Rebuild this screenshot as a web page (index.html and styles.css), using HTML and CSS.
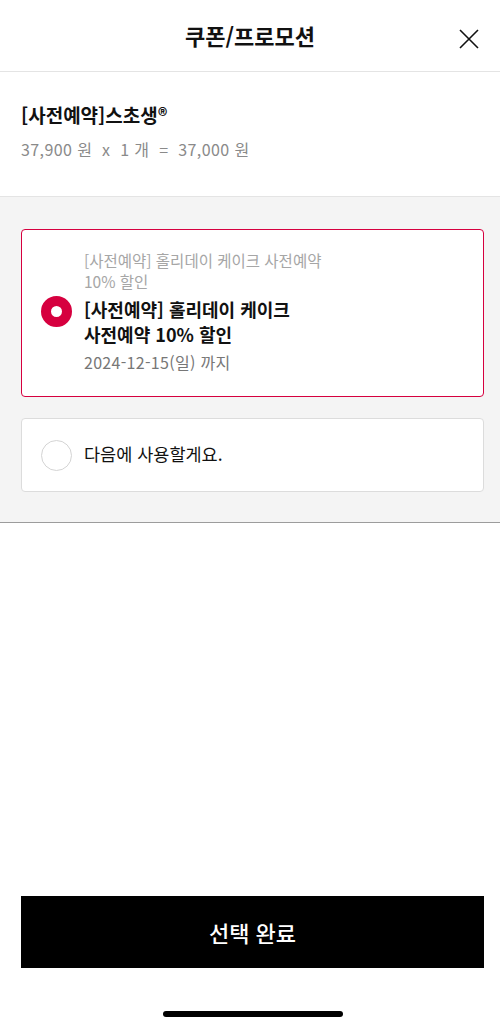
FILE: index.html
```html
<!DOCTYPE html>
<html lang="ko">
<head>
    <meta charset="UTF-8">
    <meta name="viewport" content="width=device-width, initial-scale=1.0">
    <title>쿠폰/프로모션</title>
    <link rel="stylesheet" href="styles.css">
</head>
<body>
    <div class="sheet">
        <header class="sheet-header">
            <h1 class="sheet-title">쿠폰/프로모션</h1>
            <button class="close-btn" aria-label="닫기">
                <svg width="20" height="20" viewBox="0 0 20 20">
                    <path d="M1 1 L19 19 M19 1 L1 19" stroke="#111" stroke-width="1.6" fill="none"/>
                </svg>
            </button>
        </header>

        <section class="product">
            <h2 class="product-name">[사전예약]스초생®</h2>
            <p class="product-price">37,900 원&nbsp; x&nbsp; 1 개&nbsp; =&nbsp; 37,000 원</p>
        </section>

        <section class="coupons">
            <label class="coupon selected">
                <span class="radio"></span>
                <span class="coupon-body">
                    <span class="coupon-sub">[사전예약] 홀리데이 케이크 사전예약<br>10% 할인</span>
                    <span class="coupon-name">[사전예약] 홀리데이 케이크<br>사전예약 10% 할인</span>
                    <span class="coupon-date">2024-12-15(일) 까지</span>
                </span>
            </label>
            <label class="coupon">
                <span class="radio"></span>
                <span class="coupon-body">
                    <span class="coupon-later">다음에 사용할게요.</span>
                </span>
            </label>
        </section>

        <div class="spacer"></div>

        <footer class="sheet-footer">
            <button class="confirm-btn">선택 완료</button>
            <div class="home-bar"></div>
        </footer>
    </div>
</body>
</html>
```

FILE: styles.css
```css
* {
    margin: 0;
    padding: 0;
    box-sizing: border-box;
}

body {
    font-family: "Noto Sans CJK KR", "Noto Sans", sans-serif;
    background-color: #ffffff;
    color: #111111;
}

.sheet {
    width: 500px;
    height: 1027px;
    display: flex;
    flex-direction: column;
}

/* Header */
.sheet-header {
    height: 72px;
    border-bottom: 1px solid #e4e4e4;
    display: flex;
    align-items: center;
    justify-content: center;
    position: relative;
}

.sheet-title {
    font-size: 22px;
    font-weight: 700;
    margin-top: -2px;
}

.close-btn {
    position: absolute;
    right: 21px;
    top: 29px;
    width: 20px;
    height: 20px;
    background: none;
    border: none;
    display: flex;
}

/* Product */
.product {
    height: 125px;
    padding: 29px 21px 0;
    border-bottom: 1px solid #e4e4e4;
}

.product-name {
    font-size: 19px;
    font-weight: 700;
    line-height: 28px;
}

.product-price {
    margin-top: 9px;
    font-size: 16px;
    color: #8a8a8a;
    line-height: 22px;
    letter-spacing: 0.4px;
}

/* Coupon list */
.coupons {
    background-color: #f4f4f4;
    padding: 32px 16px 30px 21px;
    border-bottom: 1px solid #9c9c9c;
    display: flex;
    flex-direction: column;
    gap: 21px;
}

.coupon {
    background-color: #ffffff;
    border: 1px solid #dcdcdc;
    border-radius: 4px;
    display: flex;
    align-items: center;
    padding: 0 20px 0 19px;
    min-height: 74px;
}

.coupon.selected {
    border-color: #d6003f;
    padding-top: 20px;
    padding-bottom: 23px;
}

.radio {
    flex: none;
    width: 31px;
    height: 31px;
    border-radius: 50%;
    border: 1px solid #d4d4d4;
    background-color: #ffffff;
    margin-right: 12px;
}

.coupon.selected .radio {
    border: 10.5px solid #d6003f;
    margin-top: -1px;
}

.coupon-body {
    display: flex;
    flex-direction: column;
}

.coupon-sub {
    font-size: 15.5px;
    color: #a6a6a6;
    line-height: 21px;
}

.coupon-name {
    margin-top: 5px;
    font-size: 18px;
    font-weight: 700;
    line-height: 25px;
}

.coupon-date {
    margin-top: 4px;
    font-size: 16px;
    color: #777777;
    line-height: 22px;
    letter-spacing: 0.3px;
}

.coupon-later {
    font-size: 17.5px;
    line-height: 24px;
    margin-top: -3px;
}

.spacer {
    flex: 1;
}

/* Footer */
.sheet-footer {
    padding: 0 16px 10px 21px;
    display: flex;
    flex-direction: column;
    align-items: center;
}

.confirm-btn {
    width: 100%;
    height: 72px;
    background-color: #000000;
    color: #ffffff;
    border: none;
    font-family: inherit;
    font-size: 22px;
    font-weight: 500;
}

.home-bar {
    margin-top: 43px;
    width: 180px;
    height: 6px;
    border-radius: 3px;
    background-color: #000000;
}
```
